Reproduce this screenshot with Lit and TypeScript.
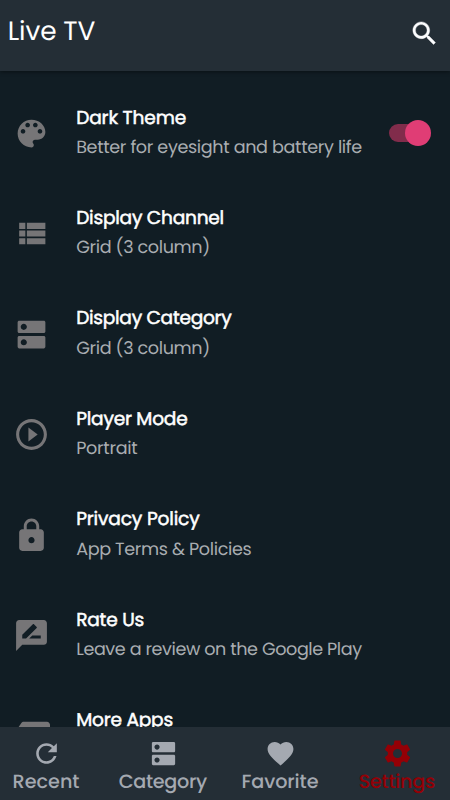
import { LitElement, html, css, svg } from "lit";
import { customElement, property } from "lit/decorators.js";

const icons: Record<string, string> = {
  search:
    "M15.5 14h-.79l-.28-.27C15.41 12.59 16 11.11 16 9.5 16 5.91 13.09 3 9.5 3S3 5.91 3 9.5 5.91 16 9.5 16c1.61 0 3.09-.59 4.23-1.57l.27.28v.79l5 4.99L20.49 19l-4.99-5zm-6 0C7.01 14 5 11.99 5 9.5S7.01 5 9.5 5 14 7.01 14 9.5 11.99 14 9.5 14z",
  palette:
    "M12 3c-4.97 0-9 4.03-9 9s4.03 9 9 9c.83 0 1.5-.67 1.5-1.5 0-.39-.15-.74-.39-1.01-.23-.26-.38-.61-.38-.99 0-.83.67-1.5 1.5-1.5H16c2.76 0 5-2.24 5-5 0-4.42-4.03-8-9-8zm-5.5 9c-.83 0-1.5-.67-1.5-1.5S5.67 9 6.5 9 8 9.67 8 10.5 7.33 12 6.5 12zm3-4C8.67 8 8 7.33 8 6.5S8.67 5 9.5 5s1.5.67 1.5 1.5S10.33 8 9.5 8zm5 0c-.83 0-1.5-.67-1.5-1.5S13.67 5 14.5 5s1.5.67 1.5 1.5S15.33 8 14.5 8zm3 4c-.83 0-1.5-.67-1.5-1.5S16.67 9 17.5 9s1.5.67 1.5 1.5-.67 1.5-1.5 1.5z",
  list: "M4 14h4v-4H4v4zm0 5h4v-4H4v4zM4 9h4V5H4v4zm5 5h12v-4H9v4zm0 5h12v-4H9v4zM9 5v4h12V5H9z",
  dns: "M20 13H4c-.55 0-1 .45-1 1v6c0 .55.45 1 1 1h16c.55 0 1-.45 1-1v-6c0-.55-.45-1-1-1zM7 19c-1.1 0-2-.9-2-2s.9-2 2-2 2 .9 2 2-.9 2-2 2zM20 3H4c-.55 0-1 .45-1 1v6c0 .55.45 1 1 1h16c.55 0 1-.45 1-1V4c0-.55-.45-1-1-1zM7 9c-1.1 0-2-.9-2-2s.9-2 2-2 2 .9 2 2-.9 2-2 2z",
  play: "M10 16.5l6-4.5-6-4.5v9zM12 2C6.48 2 2 6.48 2 12s4.48 10 10 10 10-4.48 10-10S17.52 2 12 2zm0 18c-4.41 0-8-3.59-8-8s3.59-8 8-8 8 3.59 8 8-3.59 8-8 8z",
  lock: "M18 8h-1V6c0-2.76-2.24-5-5-5S7 3.24 7 6v2H6c-1.1 0-2 .9-2 2v10c0 1.1.9 2 2 2h12c1.1 0 2-.9 2-2V10c0-1.1-.9-2-2-2zm-6 9c-1.1 0-2-.9-2-2s.9-2 2-2 2 .9 2 2-.9 2-2 2zm3.1-9H8.9V6c0-1.71 1.39-3.1 3.1-3.1 1.71 0 3.1 1.39 3.1 3.1v2z",
  review:
    "M20 2H4c-1.1 0-1.99.9-1.99 2L2 22l4-4h14c1.1 0 2-.9 2-2V4c0-1.1-.9-2-2-2zM6 14v-2.47l6.88-6.88c.2-.2.51-.2.71 0l1.77 1.77c.2.2.2.51 0 .71L8.47 14H6zm12 0h-7.5l2-2H18v2z",
  more: "M22 3H7c-.69 0-1.23.35-1.59.88L0 12l5.41 8.11c.36.53.9.89 1.59.89h15c1.1 0 2-.9 2-2V5c0-1.1-.9-2-2-2zM9 13.5c-.83 0-1.5-.67-1.5-1.5s.67-1.5 1.5-1.5 1.5.67 1.5 1.5-.67 1.5-1.5 1.5zm5 0c-.83 0-1.5-.67-1.5-1.5s.67-1.5 1.5-1.5 1.5.67 1.5 1.5-.67 1.5-1.5 1.5zm5 0c-.83 0-1.5-.67-1.5-1.5s.67-1.5 1.5-1.5 1.5.67 1.5 1.5-.67 1.5-1.5 1.5z",
  refresh:
    "M17.65 6.35C16.2 4.9 14.21 4 12 4c-4.42 0-7.99 3.58-7.99 8s3.57 8 7.99 8c3.73 0 6.84-2.55 7.73-6h-2.08c-.82 2.33-3.04 4-5.65 4-3.31 0-6-2.69-6-6s2.69-6 6-6c1.66 0 3.14.69 4.22 1.78L13 11h7V4l-2.35 2.35z",
  heart:
    "M12 21.35l-1.45-1.32C5.4 15.36 2 12.28 2 8.5 2 5.42 4.42 3 7.5 3c1.74 0 3.41.81 4.5 2.09C13.09 3.81 14.76 3 16.5 3 19.58 3 22 5.42 22 8.5c0 3.78-3.4 6.86-8.55 11.54L12 21.35z",
  gear: "M19.43 12.98c.04-.32.07-.64.07-.98s-.03-.66-.07-.98l2.11-1.65c.19-.15.24-.42.12-.64l-2-3.46c-.12-.22-.39-.3-.61-.22l-2.49 1c-.52-.4-1.08-.73-1.69-.98l-.38-2.65C14.46 2.18 14.25 2 14 2h-4c-.25 0-.46.18-.49.42l-.38 2.65c-.61.25-1.17.59-1.69.98l-2.49-1c-.23-.09-.49 0-.61.22l-2 3.46c-.13.22-.07.49.12.64l2.11 1.65c-.04.32-.07.65-.07.98s.03.66.07.98l-2.11 1.65c-.19.15-.24.42-.12.64l2 3.46c.12.22.39.3.61.22l2.49-1c.52.4 1.08.73 1.69.98l.38 2.65c.03.24.24.42.49.42h4c.25 0 .46-.18.49-.42l.38-2.65c.61-.25 1.17-.59 1.69-.98l2.49 1c.23.09.49 0 .61-.22l2-3.46c.12-.22.07-.49-.12-.64l-2.11-1.65zM12 15.5c-1.93 0-3.5-1.57-3.5-3.5s1.57-3.5 3.5-3.5 3.5 1.57 3.5 3.5-1.57 3.5-3.5 3.5z",
};

const icon = (name: string) => html`<svg class="icon" viewBox="0 0 24 24">${svg`<path d=${icons[name]}></path>`}</svg>`;

/** A single line of text, tracked so that it spans a given width. */
@customElement("fit-label")
export class FitLabel extends LitElement {
  @property() text = "";
  @property({ type: Number }) span = 0;

  static styles = css`
    :host {
      display: block;
      white-space: nowrap;
    }
    .line {
      display: inline-block;
    }
  `;

  render() {
    return html`<span class="line">${this.text}</span>`;
  }

  updated() {
    const line = this.renderRoot.querySelector(".line") as HTMLElement;
    line.style.letterSpacing = "0px";
    const gap = (this.span - line.getBoundingClientRect().width) / (this.text.length - 1);
    line.style.letterSpacing = `${gap}px`;
    line.style.marginRight = `${-gap}px`;
  }
}

interface Row {
  icon: string;
  title: string;
  titleSpan: number;
  note?: string;
  noteSpan?: number;
  on?: boolean;
}

const rows: Row[] = [
  { icon: "palette", title: "Dark Theme", titleSpan: 110, note: "Better for eyesight and battery life", noteSpan: 286, on: true },
  { icon: "list", title: "Display Channel", titleSpan: 148, note: "Grid (3 column)", noteSpan: 134 },
  { icon: "dns", title: "Display Category", titleSpan: 155.5, note: "Grid (3 column)", noteSpan: 134 },
  { icon: "play", title: "Player Mode", titleSpan: 111.5, note: "Portrait", noteSpan: 61.5 },
  { icon: "lock", title: "Privacy Policy", titleSpan: 123.5, note: "App Terms & Policies", noteSpan: 175.5 },
  { icon: "review", title: "Rate Us", titleSpan: 68, note: "Leave a review on the Google Play", noteSpan: 286 },
  { icon: "more", title: "More Apps", titleSpan: 97 },
];

const tabs = [
  { icon: "refresh", label: "Recent", span: 67 },
  { icon: "dns", label: "Category", span: 88.5 },
  { icon: "heart", label: "Favorite", span: 77 },
  { icon: "gear", label: "Settings", span: 76.5, active: true },
];

@customElement("app-root")
export class AppRoot extends LitElement {
  static styles = css`
    :host {
      display: flex;
      flex-direction: column;
      height: 800px;
      overflow: hidden;
      background: #111d24;
      color: #fff;
      font-family: Poppins, Inter, "Noto Sans", sans-serif;
      font-feature-settings: "cv11";
      text-rendering: geometricPrecision;
    }
    .icon {
      display: block;
      flex: none;
      fill: currentColor;
    }
    .bar {
      flex: none;
      box-sizing: border-box;
      height: 70.5px;
      padding: 0 10px 0 7.8px;
      display: flex;
      justify-content: space-between;
      align-items: flex-start;
      background: #242e36;
      box-shadow: 0 1px 4px rgba(0, 0, 0, 0.45);
      z-index: 1;
    }
    .bar .icon {
      width: 31px;
      height: 31px;
      margin-top: 18px;
      color: #fcfdfe;
      stroke: currentColor;
      stroke-width: 0.3px;
    }
    .brand {
      margin-top: 12px;
      font-size: 26.4px;
      line-height: 40px;
    }
    .list {
      flex: 1;
      min-height: 0;
      overflow: hidden;
      padding-top: 12.8px;
    }
    .row {
      height: 100.4px;
      display: flex;
      align-items: center;
      padding: 0 19px 0 13.3px;
    }
    .row .icon {
      width: 37px;
      height: 37px;
      color: #767577;
    }
    .texts {
      flex: 1;
      height: 60px;
      margin-left: 25.9px;
      padding-bottom: 1.8px;
    }
    .title {
      font-size: 18.6px;
      line-height: 29.5px;
      -webkit-text-stroke: 0.5px currentColor;
    }
    .note {
      font-size: 17.6px;
      line-height: 33.4px;
      color: #a9adb1;
    }
    .switch {
      width: 37px;
      height: 18px;
      margin-right: 5px;
      border-radius: 9px;
      background: #812c4b;
      display: flex;
      align-items: center;
      justify-content: flex-end;
    }
    .thumb {
      flex: none;
      width: 26px;
      height: 26px;
      margin-right: -4.5px;
      border-radius: 50%;
      background: #e03d75;
    }
    .tabs {
      flex: none;
      height: 73px;
      margin: 0 -5.5px 0 -12.5px;
      display: flex;
      background: #242e36;
    }
    .tab {
      flex: 1;
      display: flex;
      flex-direction: column;
      align-items: center;
      padding-top: 11px;
      font-size: 19.2px;
      line-height: 25px;
      font-weight: 500;
      color: #a4a9b1;
    }
    .tab .icon {
      width: 31px;
      height: 31px;
    }
    .active {
      color: #940006;
    }
  `;

  render() {
    return html`
      <header class="bar">
        <fit-label class="brand" text="Live TV" .span=${87.5}></fit-label>
        ${icon("search")}
      </header>
      <main class="list">
        ${rows.map(
          (r) => html`<section class="row">
            ${icon(r.icon)}
            <div class="texts">
              <fit-label class="title" .text=${r.title} .span=${r.titleSpan}></fit-label>
              ${r.note ? html`<fit-label class="note" .text=${r.note} .span=${r.noteSpan}></fit-label>` : ""}
            </div>
            ${r.on ? html`<div class="switch"><div class="thumb"></div></div>` : ""}
          </section>`
        )}
      </main>
      <nav class="tabs">
        ${tabs.map(
          (t) => html`<div class="tab ${t.active ? "active" : ""}">
            ${icon(t.icon)}
            <fit-label .text=${t.label} .span=${t.span}></fit-label>
          </div>`
        )}
      </nav>
    `;
  }
}
